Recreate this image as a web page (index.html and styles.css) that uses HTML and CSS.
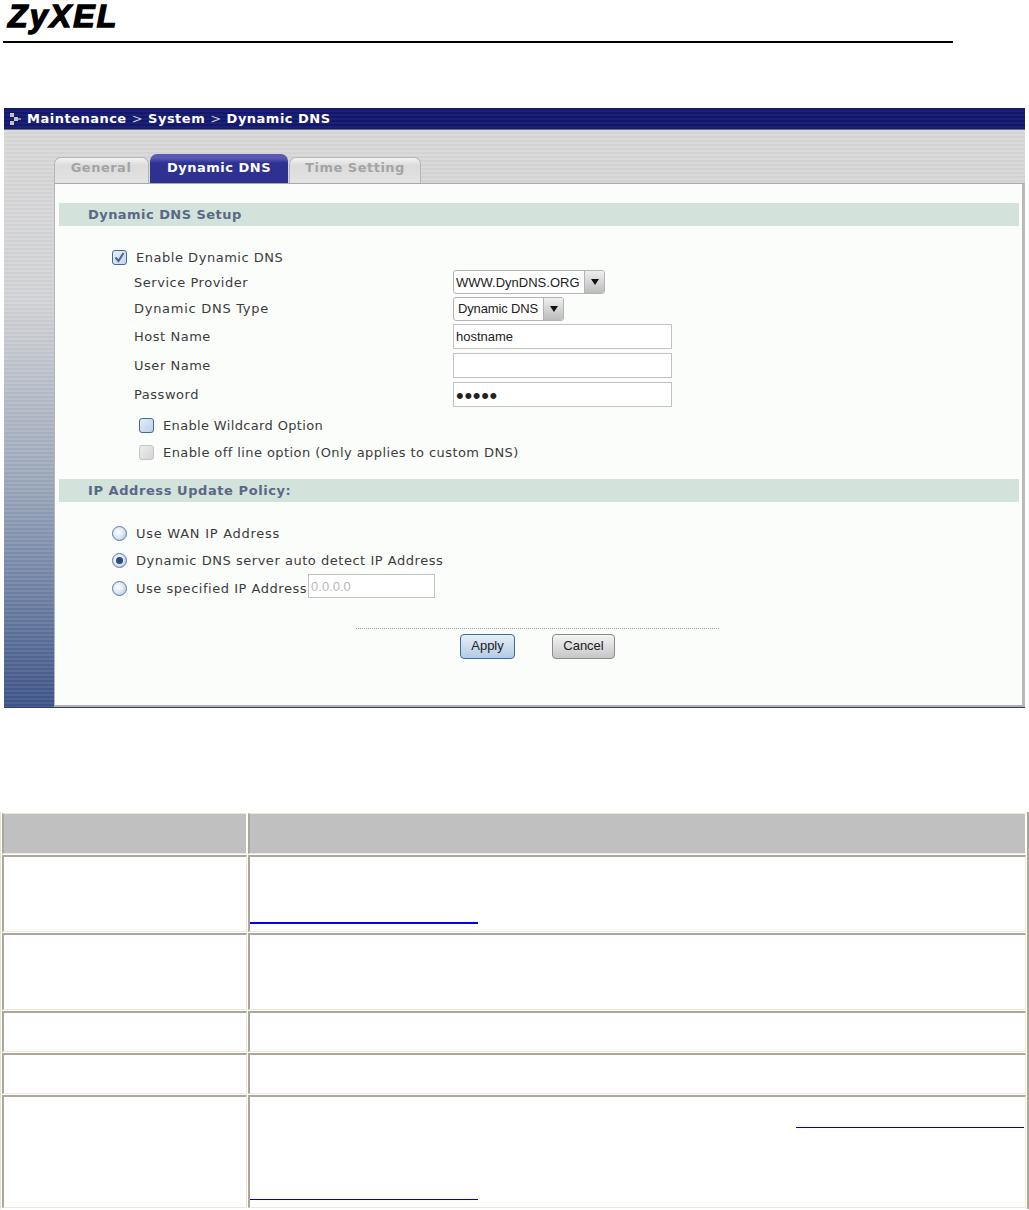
FILE: index.html
```html
<!DOCTYPE html>
<html lang="en">
<head>
<meta charset="utf-8">
<title>Dynamic DNS</title>
<link rel="stylesheet" href="styles.css">
</head>
<body>
<header class="doc-head"><span class="logo">ZyXEL</span></header>
<main>
<section class="screen">
  <div class="titlebar">
    <svg class="crumb-icon" width="11" height="12" viewBox="0 0 11 12"><path d="M0 0h4v4H0zM4 4h4v4H4zM0 8h4v4H0z" fill="#c4c4c4"/><path d="M8 5h3v2H8z" fill="#8f8f8f"/></svg>
    <span class="crumbs">Maintenance <i>&gt;</i> System <i>&gt;</i> Dynamic DNS</span>
  </div>
  <div class="workspace">
    <div class="tabs">
      <span class="tab tab-general">General</span>
      <span class="tab tab-active">Dynamic DNS</span>
      <span class="tab tab-time">Time Setting</span>
    </div>
    <div class="panel">
      <h2 class="bar bar-first">Dynamic DNS Setup</h2>
      <div class="form">
        <div class="row row-enable"><span class="check checked"><svg width="11" height="11" viewBox="0 0 11 11"><path d="M1.5 5.5l3 3.5 5-8" fill="none" stroke="#4a6796" stroke-width="2"/></svg></span><span>Enable Dynamic DNS</span></div>
        <div class="row row-service"><span class="label">Service Provider</span><span class="select select-wide"><span class="select-text">WWW.DynDNS.ORG</span><span class="arrow"></span></span></div>
        <div class="row row-type"><span class="label">Dynamic DNS Type</span><span class="select select-short"><span class="select-text">Dynamic DNS</span><span class="arrow"></span></span></div>
        <div class="row row-field"><span class="label">Host Name</span><input class="field" type="text" value="hostname"></div>
        <div class="row row-field"><span class="label">User Name</span><input class="field" type="text"></div>
        <div class="row row-field"><span class="label">Password</span><input class="field field-pass" type="password" value="12345"></div>
        <div class="row row-option row-wild"><span class="check"></span><span>Enable Wildcard Option</span></div>
        <div class="row row-option row-off"><span class="check disabled"></span><span>Enable off line option (Only applies to custom DNS)</span></div>
      </div>
      <h2 class="bar bar-second">IP Address Update Policy:</h2>
      <div class="radios">
        <div class="row row-radio row-radio-first"><span class="radio"></span><span>Use WAN IP Address</span></div>
        <div class="row row-radio row-radio-mid"><span class="radio on"></span><span>Dynamic DNS server auto detect IP Address</span></div>
        <div class="row row-radio"><span class="radio"></span><span>Use specified IP Address</span><input class="ip" type="text" value="0.0.0.0" disabled></div>
      </div>
      <div class="rule"></div>
      <div class="actions">
        <button class="btn btn-apply" type="button">Apply</button>
        <button class="btn btn-cancel" type="button">Cancel</button>
      </div>
    </div>
  </div>
</section>
<table class="doc-table">
  <tr class="r-head"><th class="c1"></th><th></th></tr>
  <tr class="r-tall"><td class="c1"></td><td><a class="blank-link link-first"></a></td></tr>
  <tr class="r-tall"><td class="c1"></td><td></td></tr>
  <tr class="r-short"><td class="c1"></td><td></td></tr>
  <tr class="r-short"><td class="c1"></td><td></td></tr>
  <tr class="r-last"><td class="c1"></td><td><a class="blank-link link-right"></a><a class="blank-link link-low"></a></td></tr>
</table>
</main>
</body>
</html>
```
FILE: styles.css
```css
* { box-sizing: border-box; }
html, body { margin: 0; padding: 0; background: #fff; }
body { width: 1029px; height: 1210px; overflow: hidden; font-family: "DejaVu Sans", sans-serif; }

.doc-head { margin-left: 3px; width: 950px; height: 43px; border-bottom: 2px solid #000; }
.logo { display: block; margin-left: 5px; font: italic 700 32px/32px "Liberation Sans", sans-serif; letter-spacing: 2.2px; color: #000; -webkit-text-stroke: 1.4px #000; height: 32px; }

.screen { margin: 65px 0 0 4px; width: 1021px; height: 600px; display: flex; flex-direction: column; }
.titlebar { height: 22px; display: flex; align-items: center; gap: 6px; padding-left: 6px; border-bottom: 1px solid #6b6f80;
  background: repeating-linear-gradient(180deg, #14186a 0 2px, #1c2178 2px 4px); }
.crumbs { color: #fff; font-size: 13px; font-weight: 700; letter-spacing: .49px; white-space: nowrap; }
.crumbs i { font-style: normal; font-weight: 400; color: #c8c8d8; }

.workspace { flex: 1; padding: 23px 0 0 50px; border-bottom: 1px solid #2c3f78;
  background:
    repeating-linear-gradient(180deg, rgba(255,255,255,.07) 0 2px, rgba(0,0,0,.02) 2px 4px),
    linear-gradient(180deg, #d8d8d8 0, #d2d3d6 30%, #9aa6ba 62%, #6b7ea2 82%, #3d5488 100%); }

.tabs { display: flex; align-items: flex-end; height: 30px; font-size: 13px; font-weight: 700; letter-spacing: .5px; }
.tab { display: flex; align-items: center; justify-content: center; border-radius: 7px 7px 0 0; white-space: nowrap; }
.tab-general, .tab-time { height: 26px; padding-bottom: 6px; color: #a4a4a4; border: 1px solid #b6b6b6; border-bottom: 0;
  background: linear-gradient(180deg, #f4f4f4 0, #dcdcdc 30%, #e3e3e3 100%); }
.tab-general { width: 95px; margin-right: 1px; padding-right: 1px; }
.tab-active { width: 138px; height: 29px; padding-bottom: 3px; color: #fff; margin-right: 1px; background: linear-gradient(180deg, #5a5cb4 0, #5a5cb4 4px, #2e3192 9px, #2e3192 100%); }
.tab-time { width: 132px; }

.panel { height: 524px; margin-top: 0; padding: 19px 3px 0 4px; background: #fbfdfb; border-top: 1px solid #a9a9a9; border-left: 1px solid #b5b5b5; border-right: 3px solid #b9b9b9; border-bottom: 2px solid #b0b0b0; }
.bar { margin: 0; height: 23px; padding-left: 29px; display: flex; align-items: center; background: #d3e2db; color: #5a6888; font-size: 13px; font-weight: 700; letter-spacing: .45px; }
.bar-second { margin-top: 13px; letter-spacing: .57px; }

.form { padding-top: 19px; }
.row { display: flex; align-items: center; font-size: 13px; color: #3c3c3c; letter-spacing: .53px; white-space: nowrap; }
.row-enable { height: 24px; padding-left: 53px; gap: 9px; }
.row-service { height: 26px; }
.row-type { height: 27px; letter-spacing: .72px; }
.row-field { height: 29px; }
.row-option { height: 28px; gap: 9px; padding-left: 80px; }
.row-wild { margin-top: 2px; letter-spacing: .35px; }
.row-off { height: 27px; letter-spacing: .42px; }
.label { width: 319px; margin-left: 75px; }

.check { width: 15px; height: 15px; border: 1px solid #3f6a9c; border-radius: 3px; background: linear-gradient(135deg, #e4edf6, #bcd0e6); display: flex; align-items: center; justify-content: center; flex: none; }
.check.checked { background: linear-gradient(135deg, #e8eef6, #c8d6e8); }
.check.disabled { border-color: #c4c4c4; background: linear-gradient(135deg, #eee, #d4d4d4); }

.select { height: 24px; display: flex; align-items: center; justify-content: space-between; border: 1px solid #b4b4b4; border-radius: 3px; background: #fff; font: 13px "Liberation Sans", sans-serif; color: #222; letter-spacing: 0; }
.select-wide { width: 152px; }
.select-short { width: 111px; }
.select-text { padding-left: 2px; }
.select-short .select-text { padding-left: 4px; letter-spacing: -.15px; }
.arrow { width: 20px; height: 22px; display: flex; align-items: center; justify-content: center; border-left: 1px solid #b4b4b4; background: linear-gradient(180deg, #efefef, #bcbcbc); border-radius: 0 2px 2px 0; }
.arrow::after { content: ""; border-left: 4px solid transparent; border-right: 4px solid transparent; border-top: 6px solid #111; }

.field { width: 219px; height: 25px; padding: 0 2px; border: 1px solid #c2c2c2; background: #fff; font: 13px "Liberation Sans", sans-serif; color: #222; outline: 0; letter-spacing: 0; }
.field-pass { padding-top: 3px; font-size: 22px; letter-spacing: .7px; }

.radios { padding-top: 17px; }
.row-radio { height: 28px; padding-left: 53px; gap: 9px; }
.row-radio-first { letter-spacing: .73px; }
.row-radio-mid { height: 27px; }
.radio { width: 15px; height: 15px; border: 1px solid #5a7ba8; border-radius: 50%; background: radial-gradient(circle at 40% 40%, #fff 0, #dfe8f3 45%, #a6bcd8 100%); flex: none; display: flex; align-items: center; justify-content: center; }
.radio.on::after { content: ""; width: 7px; height: 7px; border-radius: 50%; background: #2f4a78; }
.ip { width: 127px; height: 24px; margin: -4px 0 0 -8px; padding: 0 2px; border: 1px solid #c2c2c2; background: #fff; font: 13px "Liberation Sans", sans-serif; color: #b8b8b8; letter-spacing: 0; }

.rule { width: 363px; margin: 26px 0 0 297px; border-top: 1px dotted #9a9a9a; }
.actions { display: flex; margin: 5px 0 0 401px; gap: 37px; }
.btn { height: 25px; padding: 0 0 2px; border-radius: 4px; font: 13px "Liberation Sans", sans-serif; color: #222; cursor: default; }
.btn-apply { width: 55px; border: 1px solid #3f6a9c; background: linear-gradient(180deg, #e6eef8, #b4cbe6); }
.btn-cancel { width: 63px; border: 1px solid #8a8a8a; background: linear-gradient(180deg, #f4f4f4, #c6c6c6); }

.doc-table { margin: 104px 0 0 0; width: 1029px; height: 396px; table-layout: fixed; border-collapse: separate; border-spacing: 1px; border-style: solid; border-width: 0 2px 0 1px; border-color: #e6e3d4 #aca899 #aca899 #e6e3d4; }
.doc-table th, .doc-table td { padding: 0; vertical-align: top; border-style: solid; border-width: 2px 1px 1px 2px; border-color: #aca899 #ece9d8 #ece9d8 #aca899; background: #fff; }
.doc-table th { background: #c0c0c0; border-color: #ece9d8 #fff #ece9d8 #aca899; border-top-width: 1px; }
.c1 { width: 245px; }
.r-head { height: 41px; }
.r-tall { height: 77px; }
.r-short { height: 41px; }
.r-last { height: 113px; }

.blank-link { display: block; width: 228px; }
.link-first { margin: 65px 0 0 0; height: 2px; background: #0000ee; }
.link-right { margin: 30px 1px 0 auto; height: 1px; background: #0000cc; }
.link-low { margin: 71px 0 0 0; height: 1px; background: #0000cc; }
```
